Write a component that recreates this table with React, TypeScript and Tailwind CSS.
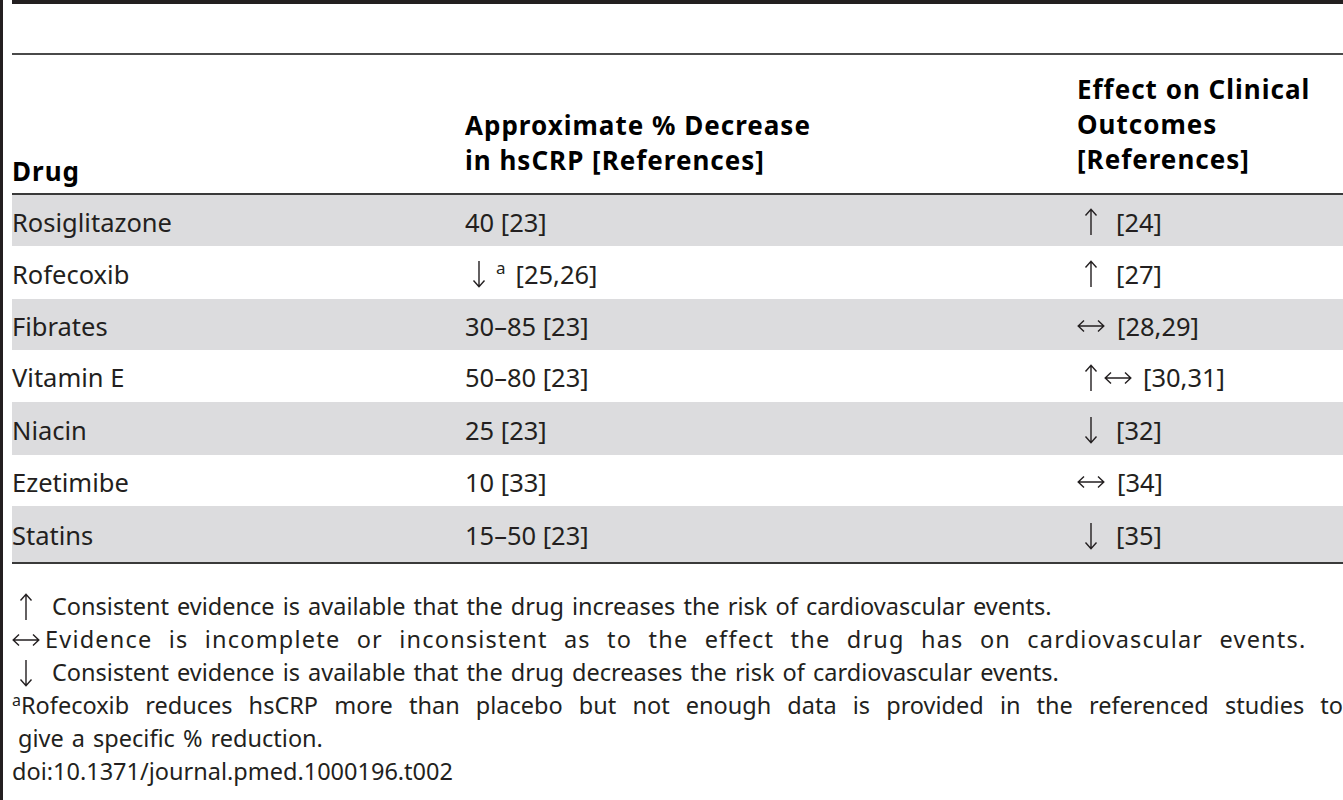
import React from "react";

type Arrow = "up" | "down" | "both";

// thin arrow glyphs drawn like the ones in the printed table
function ArrowIcon({ dir }: { dir: Arrow }) {
    if (dir === "both") {
        return (
            <svg width="28" height="14" viewBox="0 0 28 14" className="shrink-0">
                <path d="M1 7H27M7 1.5L1.2 7L7 12.5M21 1.5L26.8 7L21 12.5" fill="none" stroke="#231f20" strokeWidth="1.4" />
            </svg>
        );
    }
    const d = dir === "up" ? "M7 1V27M1.5 7.5L7 1.2L12.5 7.5" : "M7 1V27M1.5 20.5L7 26.8L12.5 20.5";
    return (
        <svg width="14" height="28" viewBox="0 0 14 28" className="shrink-0">
            <path d={d} fill="none" stroke="#231f20" strokeWidth="1.4" />
        </svg>
    );
}

type Row = {
    drug: string;
    decrease: React.ReactNode;
    effect: React.ReactNode;
    h: string;
};

const rows: Row[] = [
    {
        drug: "Rosiglitazone",
        decrease: "40 [23]",
        effect: (
            <>
                <span className="flex w-[28px] justify-center"><ArrowIcon dir="up" /></span>
                <span className="ml-[11px]">[24]</span>
            </>
        ),
        h: "h-[51px]",
    },
    {
        drug: "Rofecoxib",
        decrease: (
            <>
                <span className="ml-[7px]"><ArrowIcon dir="down" /></span>
                <span className="ml-[10px] -mt-[12px] text-[17px]">a</span>
                <span className="ml-[10px]">[25,26]</span>
            </>
        ),
        effect: (
            <>
                <span className="flex w-[28px] justify-center"><ArrowIcon dir="up" /></span>
                <span className="ml-[11px]">[27]</span>
            </>
        ),
        h: "h-[53px]",
    },
    {
        drug: "Fibrates",
        decrease: "30–85 [23]",
        effect: (
            <>
                <ArrowIcon dir="both" />
                <span className="ml-[12px]">[28,29]</span>
            </>
        ),
        h: "h-[51px]",
    },
    {
        drug: "Vitamin E",
        decrease: "50–80 [23]",
        effect: (
            <>
                <span className="ml-[7px]"><ArrowIcon dir="up" /></span>
                <span className="ml-[6px]"><ArrowIcon dir="both" /></span>
                <span className="ml-[11px]">[30,31]</span>
            </>
        ),
        h: "h-[52px]",
    },
    {
        drug: "Niacin",
        decrease: "25 [23]",
        effect: (
            <>
                <span className="flex w-[28px] justify-center"><ArrowIcon dir="down" /></span>
                <span className="ml-[11px]">[32]</span>
            </>
        ),
        h: "h-[53px]",
    },
    {
        drug: "Ezetimibe",
        decrease: "10 [33]",
        effect: (
            <>
                <ArrowIcon dir="both" />
                <span className="ml-[12px]">[34]</span>
            </>
        ),
        h: "h-[51px]",
    },
    {
        drug: "Statins",
        decrease: "15–50 [23]",
        effect: (
            <>
                <span className="flex w-[28px] justify-center"><ArrowIcon dir="down" /></span>
                <span className="ml-[11px]">[35]</span>
            </>
        ),
        h: "h-[56px]",
    },
];

export default function App() {
    return (
        <div className="flex h-[800px] w-[1343px] overflow-hidden bg-white text-[25.5px] text-[#231f20] font-['Noto_Sans',sans-serif]">
            {/* left rule */}
            <div className="w-[3px] shrink-0 bg-[#231f20]" />

            <div className="ml-[9px] flex-1">
                {/* top rules */}
                <div className="h-[4px] bg-[#231f20]" />
                <div className="h-[49px]" />
                <div className="h-[2px] bg-[#4a4a4a]" />

                {/* Header */}
                <div className="grid h-[138px] grid-cols-[453px_612px_1fr] text-[26px] font-bold leading-[35px] tracking-[1px] text-black">
                    <div className="flex items-end pb-[4px]">Drug</div>
                    <div className="flex items-end pb-[15px]">
                        <span>Approximate % Decrease<br />in hsCRP [References]</span>
                    </div>
                    <div className="flex items-end pb-[16px]">
                        <span>Effect on Clinical<br />Outcomes<br />[References]</span>
                    </div>
                </div>
                <div className="h-[2px] bg-[#3a3a3a]" />

                {/* Rows */}
                {rows.map((row, i) => (
                    <div
                        key={row.drug}
                        className={`grid grid-cols-[453px_612px_1fr] ${row.h} ${i % 2 === 0 ? "bg-[#dcdcde]" : "bg-white"}`}
                    >
                        <div className="flex items-center pt-[3px]">{row.drug}</div>
                        <div className="flex items-center pt-[3px]">{row.decrease}</div>
                        <div className="flex items-center pt-[3px]">{row.effect}</div>
                    </div>
                ))}
                <div className="h-[2px] bg-[#3a3a3a]" />

                {/* Footnotes */}
                <div className="mt-[26px] text-[23.5px] leading-[33px] [word-spacing:2px]">
                    <div className="flex items-center">
                        <span className="flex w-[28px] justify-center"><ArrowIcon dir="up" /></span>
                        <span className="ml-[12px]">Consistent evidence is available that the drug increases the risk of cardiovascular events.</span>
                    </div>
                    <div className="flex items-center">
                        <ArrowIcon dir="both" />
                        <span className="ml-[5px] whitespace-nowrap tracking-[1.2px] [word-spacing:9px]">Evidence is incomplete or inconsistent as to the effect the drug has on cardiovascular events.</span>
                    </div>
                    <div className="flex items-center">
                        <span className="flex w-[28px] justify-center"><ArrowIcon dir="down" /></span>
                        <span className="ml-[12px]">Consistent evidence is available that the drug decreases the risk of cardiovascular events.</span>
                    </div>
                    <div className="text-justify [text-align-last:justify]">
                        <sup className="text-[16px]">a</sup>Rofecoxib reduces hsCRP more than placebo but not enough data is provided in the referenced studies to
                    </div>
                    <div className="pl-[6px]">give a specific % reduction.</div>
                    <div>doi:10.1371/journal.pmed.1000196.t002</div>
                </div>
            </div>
        </div>
    );
}
